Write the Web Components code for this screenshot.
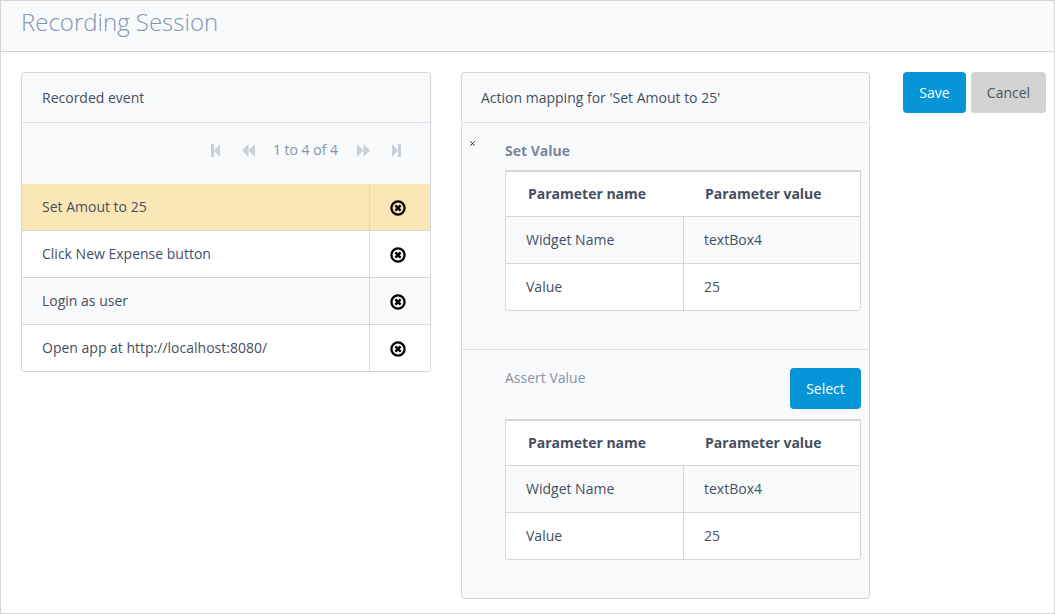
<!DOCTYPE html>
<html>
<head>
<meta charset="utf-8">
<title>Recording Session</title>
<style>
html, body { margin: 0; padding: 0; background: #fff; }
body { font: 14px/20px "Open Sans", "Liberation Sans", sans-serif; color: #454f5f; }
</style>
</head>
<body>
<rec-app>
    <rec-panel slot="left" heading="Recorded event">
        <event-pager label="1 to 4 of 4"></event-pager>
        <event-row selected>Set Amout to 25</event-row>
        <event-row>Click New Expense button</event-row>
        <event-row>Login as user</event-row>
        <event-row>Open app at http://localhost:8080/</event-row>
    </rec-panel>
    <rec-panel slot="center" heading="Action mapping for 'Set Amout to 25'" detached>
        <action-section heading="Set Value" active>
            <param-row name="Widget Name" value="textBox4"></param-row>
            <param-row name="Value" value="25"></param-row>
        </action-section>
        <action-section heading="Assert Value" selectable>
            <param-row name="Widget Name" value="textBox4"></param-row>
            <param-row name="Value" value="25"></param-row>
        </action-section>
    </rec-panel>
    <rec-button slot="actions" kind="primary" style="width: 63px">Save</rec-button>
    <rec-button slot="actions" kind="plain" style="width: 75px">Cancel</rec-button>
</rec-app>

<script>
class RecApp extends HTMLElement {
    constructor() {
        super();
        this.attachShadow({mode: 'open'});
        this.shadowRoot.innerHTML = `
            <style>
                :host {
                    display: block;
                    box-sizing: border-box;
                    width: 1055px;
                    height: 614px;
                    border: 1px solid #d4d6d9;
                    overflow: hidden;
                }
                header {
                    box-sizing: border-box;
                    height: 51px;
                    padding: 4px 20px 0;
                    background: #f9fafc;
                    border-bottom: 1px solid #d4d6d9;
                    font-size: 24px;
                    font-weight: 300;
                    line-height: 33px;
                    color: #8494b0;
                }
                main {
                    display: grid;
                    grid-template-columns: 410px 409px auto;
                    column-gap: 30px;
                    padding: 20px 0 0 20px;
                    align-items: start;
                }
                .actions {
                    display: flex;
                    gap: 5px;
                    margin-left: 3px;
                }
            </style>
            <header>Recording Session</header>
            <main>
                <slot name="left"></slot>
                <slot name="center"></slot>
                <div class="actions"><slot name="actions"></slot></div>
            </main>
        `;
    }
}

class RecPanel extends HTMLElement {
    constructor() {
        super();
        this.attachShadow({mode: 'open'});
        this.shadowRoot.innerHTML = `
            <style>
                :host { display: block; }
                .head {
                    box-sizing: border-box;
                    height: 51px;
                    padding: 15px 20px 0;
                    background: #f9fafc;
                    border: 1px solid #d4d6d9;
                    border-radius: 4px 4px 0 0;
                    color: #454f5f;
                }
                .body {
                    margin-top: -1px;
                    background: #fff;
                    border: 1px solid #d4d6d9;
                    border-top-color: #dcdfe3;
                    border-radius: 0 0 4px 4px;
                    overflow: hidden;
                }
                :host([detached]) .head { border-bottom: 0; height: 50px; padding-left: 19px; }
                :host([detached]) .body {
                    margin-top: 0;
                    background: #f9fafc;
                    border-radius: 4px;
                    box-sizing: border-box;
                    height: 477px;
                    position: relative;
                }
            </style>
            <div class="head"></div>
            <div class="body"><slot></slot></div>
        `;
        this.shadowRoot.querySelector(".head").textContent = this.getAttribute("heading");
    }
}

class EventPager extends HTMLElement {
    constructor() {
        super();
        this.attachShadow({mode: 'open'});
        this.shadowRoot.innerHTML = `
            <style>
                :host {
                    display: flex;
                    align-items: center;
                    justify-content: flex-end;
                    height: 54px;
                    padding: 0 29px 7px 0;
                    background: #f9fafc;
                    color: #8494b0;
                }
                svg { display: block; height: 13px; fill: #c8d0da; flex: none; }
                .edge { width: 9px; }
                .step { width: 13px; }
                span { margin: 0 19px 0 18px; }
                .first { margin-right: 22px; }
                .last { margin-left: 22px; }
            </style>
            <svg class="edge first" viewBox="0 0 9 13"><path d="M0 0h3v13H0zM3 6.500L9 0v13z"/></svg>
            <svg class="step" viewBox="0 0 13 13"><path d="M0 6.500L6.500 0v13zM6.500 6.500L13 0v13z"/></svg>
            <span></span>
            <svg class="step" viewBox="0 0 13 13"><path d="M0 0l6.500 6.500L0 13zM6.500 0L13 6.500 6.500 13z"/></svg>
            <svg class="edge last" viewBox="0 0 9 13"><path d="M0 0l6 6.500L0 13zM6 0h3v13H6z"/></svg>
        `;
        this.shadowRoot.querySelector("span").textContent = this.getAttribute("label");
    }
}

class EventRow extends HTMLElement {
    constructor() {
        super();
        this.attachShadow({mode: 'open'});
        this.shadowRoot.innerHTML = `
            <style>
                :host {
                    display: grid;
                    grid-template-columns: 347px 1fr;
                    height: 47px;
                    box-sizing: border-box;
                    background: #fff;
                    border-bottom: 1px solid #d4d6d9;
                    color: #454f5f;
                }
                :host(:last-child) { border-bottom: 0; height: 46px; }
                :host(:nth-child(even)) { background: #f9fafc; }
                :host([selected]) { background: #fbe7b6; }
                .label { padding: 13px 0 0 20px; }
                .remove {
                    border-left: 1px solid #d4d6d9;
                    display: flex;
                    align-items: center;
                    justify-content: center;
                    padding: 2px 4px 0 0;
                }
                svg { display: block; width: 16px; height: 16px; }
            </style>
            <div class="label"><slot></slot></div>
            <div class="remove">
                <svg viewBox="0 0 16 16">
                    <circle cx="8" cy="8" r="6.600" fill="none" stroke="#000" stroke-width="2.300"/>
                    <path d="M5.400 5.400l5.200 5.200M10.600 5.400l-5.200 5.200" stroke="#000" stroke-width="2.500"/>
                </svg>
            </div>
        `;
    }
}

class ActionSection extends HTMLElement {
    constructor() {
        super();
        this.attachShadow({mode: 'open'});
        this.shadowRoot.innerHTML = `
            <style>
                :host {
                    display: block;
                    position: relative;
                    box-sizing: border-box;
                    padding: 18px 8px 0 43px;
                }
                :host(:first-child) { height: 227px; border-bottom: 1px solid #dcdfe3; }
                .bar {
                    display: flex;
                    justify-content: space-between;
                    align-items: flex-start;
                    height: 29px;
                }
                .title { color: #8a93a3; }
                :host([active]) .title { font-weight: 700; color: #7a8699; }
                :host([selectable]) .bar { height: 51px; }
                .mark {
                    position: absolute;
                    left: 8px;
                    top: 18px;
                    width: 5px;
                    height: 5px;
                }
                .table {
                    border: 1px solid #d4d6d9;
                    border-top-width: 2px;
                    border-radius: 0 0 4px 4px;
                    background: #fff;
                    overflow: hidden;
                }
                .cols {
                    display: grid;
                    grid-template-columns: 177px 1fr;
                    height: 45px;
                    box-sizing: border-box;
                    padding: 12px 0 0 22px;
                    font-weight: 700;
                    color: #454f5f;
                    border-bottom: 1px solid #d4d6d9;
                }
            </style>
            <svg class="mark" viewBox="0 0 5 5"><path d="M0.500 0.500l4 4M4.500 0.500l-4 4" stroke="#222" stroke-width="1"/></svg>
            <div class="bar">
                <div class="title"></div>
                <rec-button kind="primary" style="width: 71px" hidden>Select</rec-button>
            </div>
            <div class="table">
                <div class="cols"><div>Parameter name</div><div>Parameter value</div></div>
                <slot></slot>
            </div>
        `;
        this.shadowRoot.querySelector(".title").textContent = this.getAttribute("heading");
        if (this.hasAttribute("selectable")) {
            this.shadowRoot.querySelector("rec-button").removeAttribute("hidden");
            this.shadowRoot.querySelector(".mark").remove();
        }
    }
}

class ParamRow extends HTMLElement {
    constructor() {
        super();
        this.attachShadow({mode: 'open'});
        this.shadowRoot.innerHTML = `
            <style>
                :host {
                    display: grid;
                    grid-template-columns: 177px 1fr;
                    height: 47px;
                    box-sizing: border-box;
                    background: #fff;
                    border-bottom: 1px solid #d4d6d9;
                    color: #454f5f;
                }
                :host(:last-child) { border-bottom: 0; height: 46px; }
                :host(:nth-child(odd)) { background: #f9fafc; }
                div { padding: 13px 0 0 20px; }
                div + div { border-left: 1px solid #d4d6d9; }
            </style>
            <div class="name"></div>
            <div class="value"></div>
        `;
        this.shadowRoot.querySelector(".name").textContent = this.getAttribute("name");
        this.shadowRoot.querySelector(".value").textContent = this.getAttribute("value");
    }
}

class RecButton extends HTMLElement {
    constructor() {
        super();
        this.attachShadow({mode: 'open'});
        this.shadowRoot.innerHTML = `
            <style>
                :host {
                    display: inline-block;
                    box-sizing: border-box;
                    height: 41px;
                    padding-top: 11px;
                    border-radius: 4px;
                    line-height: 20px;
                    text-align: center;
                    white-space: nowrap;
                }
                :host([hidden]) { display: none; }
                :host([kind="primary"]) { background: #0696d7; color: #fff; }
                :host([kind="plain"]) { background: #d3d3d3; color: #4d5561; }
            </style>
            <slot></slot>
        `;
    }
}

customElements.define("rec-button", RecButton);
customElements.define("param-row", ParamRow);
customElements.define("action-section", ActionSection);
customElements.define("event-row", EventRow);
customElements.define("event-pager", EventPager);
customElements.define("rec-panel", RecPanel);
customElements.define("rec-app", RecApp);
</script>
</body>
</html>
